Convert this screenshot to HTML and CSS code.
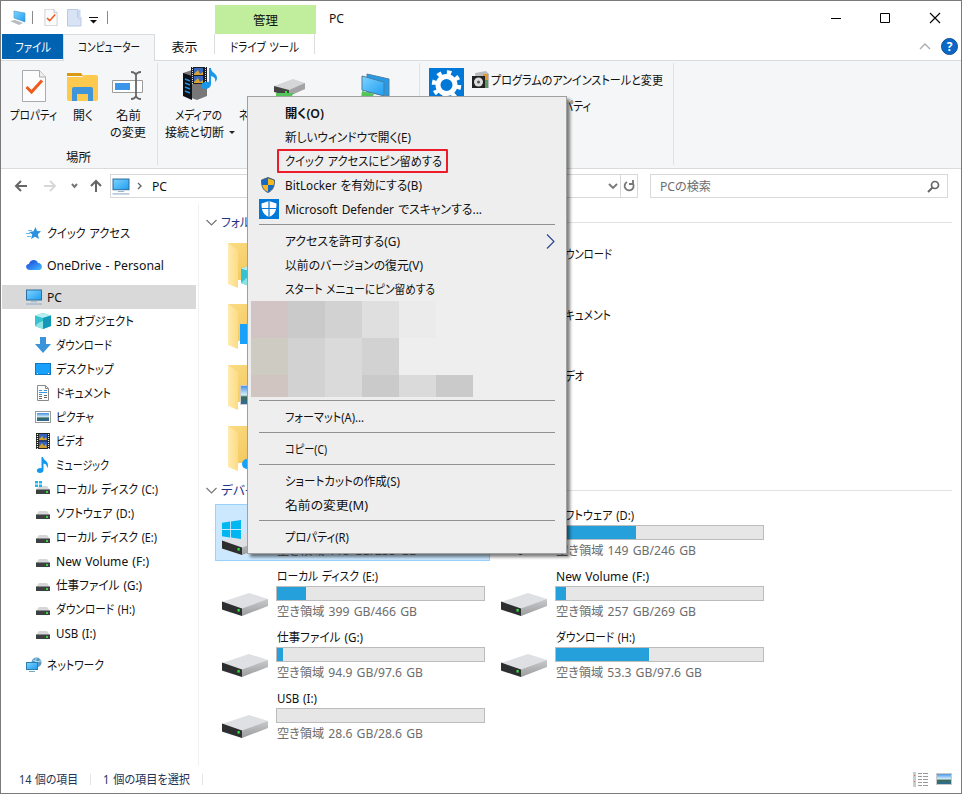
FILE: index.html
```html
<!DOCTYPE html>
<html lang="ja">
<head>
    <meta charset="UTF-8">
    <title>PC</title>
    <link rel="stylesheet" href="styles.css">
</head>
<body>
<!-- shared icons -->
<svg class="defs" width="0" height="0">
    <defs>
        <linearGradient id="blue" x1="0" y1="0" x2="1" y2="1"><stop offset="0" stop-color="#7fd4ff"/><stop offset="1" stop-color="#1e9cf0"/></linearGradient>
        <linearGradient id="gold" x1="0" y1="0" x2="1" y2="1"><stop offset="0" stop-color="#fbdc84"/><stop offset="1" stop-color="#f0c04e"/></linearGradient>
        <linearGradient id="flap" x1="0" y1="0" x2="1" y2="0"><stop offset="0" stop-color="#ffeab0"/><stop offset="1" stop-color="#fbdc84"/></linearGradient>
        <linearGradient id="side" x1="0" y1="0" x2="0" y2="1"><stop offset="0" stop-color="#c9cacc"/><stop offset="1" stop-color="#9b9c9e"/></linearGradient>
        <linearGradient id="cloud" x1="0" y1="0" x2="1" y2="1"><stop offset="0" stop-color="#1046c8"/><stop offset=".5" stop-color="#2d7df0"/><stop offset="1" stop-color="#42c3fa"/></linearGradient>
        <linearGradient id="photo" x1="0" y1="0" x2="0" y2="1"><stop offset="0" stop-color="#3f8fe0"/><stop offset=".5" stop-color="#d8eefb"/><stop offset=".6" stop-color="#3d6b56"/><stop offset="1" stop-color="#2a6ca0"/></linearGradient>
    </defs>
    <symbol id="pc" viewBox="0 0 16 16">
        <rect x=".5" y="1" width="15" height="10" fill="url(#blue)" stroke="#2d6f9e"/>
        <path d="M5 12.7h6" stroke="#9db4c9"/><path d="M0 15h16" stroke="#8fa8c8"/>
    </symbol>
    <symbol id="smalldrive" viewBox="0 0 16 16">
        <path d="M4 5h8l3 4H1z" fill="#d6d7d9"/><rect x="1" y="8.500" width="14" height="4.500" fill="#3d4043"/><rect x="11" y="10" width="2" height="2" fill="#35d63c"/>
    </symbol>
    <symbol id="drive" viewBox="0 0 48 26">
        <path d="M0 10 27 1l19 6v6L20 24 0 18z" fill="#dfe0e4"/>
        <path d="M20 16.500 46 7v7L20 24z" fill="url(#side)"/>
        <path d="M0 9.500 20 16.500V24L0 17.500z" fill="#2c2e2f"/>
        <rect x="15.500" y="17" width="2.200" height="2.600" fill="#2fe33b"/>
    </symbol>
    <symbol id="folder" viewBox="0 0 48 48">
        <path d="M1 1h37v42l-27-3z" fill="url(#gold)"/><path d="M1 1 11 8v38L1 42z" fill="url(#flap)"/><path d="M11 38h14v4l-14-1z" fill="#fff"/>
    </symbol>
    <symbol id="note" viewBox="0 0 16 16">
        <path d="M8 0c.4 3.500 5 3.500 5 8.500 0 1-.4 2-1 2.600.2-2.800-1.200-4.100-3.500-4.500V13c0 1.700-1.600 3-3.500 3s-3.200-1-3.200-2.500S3.500 11 5.200 11l1.300.2V0z" fill="#1198f0"/>
    </symbol>
    <symbol id="film" viewBox="0 0 16 16">
        <rect x="1" width="14" height="16" fill="#222"/><rect x="4" y="1" width="8" height="6.500" fill="#3461bd"/><rect x="4" y="8.500" width="8" height="6.500" fill="#3461bd"/>
        <path d="M4 6.500 7 3l2 3 2-2 1 3H4zM4 14l3-4 2 3 2-2 1 4H4z" fill="#d3a02d"/>
        <path d="M2.500 1v15M13.500 1v15" stroke="#eee" stroke-width="1.200" stroke-dasharray="1 1"/>
    </symbol>
    <symbol id="picture" viewBox="0 0 16 16"><rect x=".5" y="2.500" width="15" height="11" fill="#fff" stroke="#9a9a9a"/><rect x="2" y="4" width="12" height="8" fill="url(#photo)"/></symbol>
    <symbol id="checkdoc" viewBox="0 0 24 32">
        <path d="M.5.5h17L23.500 7v24.500H.5z" fill="#fcfcfc" stroke="#a9abad"/><path d="M17.500.5V7h6" fill="#eee" stroke="#a9abad"/><path d="m4.500 17 5 5 10.500-11.500" fill="none" stroke="#ef5b1b" stroke-width="3"/>
    </symbol>
    <symbol id="cube" viewBox="0 0 16 16"><path d="M0 2.500 8 0l8 2.500v10.500l-8 3-8-3z" fill="#35c3cf"/><path d="M0 2.500 8 5l8-2.500L8 0z" fill="#b8eef1"/><path d="M8 5l8-2.500V13l-8 3z" fill="#1498b8"/><path d="m4 9.500 4-1.500v8l-8-3z" fill="#8be4e3"/></symbol>
    <symbol id="win" viewBox="0 0 20 20"><path d="M0 3l8.500-1.300v7.800H0zM9.500 1.500 20 0v9.500H9.500zM0 10.500h8.500v7.800L0 17zM9.500 10.500H20V20L9.500 18.500z" fill="#00b7f1"/></symbol>
</svg>

<div class="window">
    <div class="titlebar">
        <svg class="ql-pc" width="17" height="16" viewBox="0 0 17 16"><path d="m4 1 11 2v9L4 8z" fill="url(#blue)" stroke="#4b93bf" stroke-width=".6"/><path d="m0 11 5-1 8 3-4 2z" fill="#b7bcc2"/></svg>
        <i class="bar"></i>
        <svg class="ql-doc" width="14" height="17"><use href="#checkdoc"/></svg>
        <svg class="ql-folder" width="15" height="18"><path d="M.5.5h10v8h3.500v8.500H.5z" fill="#d8e4f5" stroke="#bccbe0"/><path d="M10.500.5h3v10l-2 1z" fill="#cbdaf0"/></svg>
        <svg class="ql-arrow" width="9" height="8"><path d="M0 1.500h9" stroke="#111"/><path d="M1 4h7L4.500 7.500z" fill="#111"/></svg>
        <i class="bar"></i>
        <div class="manage"><span data-w="25">管理</span></div>
        <span class="title" data-w="15">PC</span>
        <svg class="winbuttons" width="112" height="12"><path d="M1 6.500h10" stroke="#000"/><path d="M50.500 1.500h9v9h-9z" fill="none" stroke="#000"/><path d="m100 1 10 10M110 1l-10 10" stroke="#000" stroke-width="1.100"/></svg>
    </div>

    <div class="tabs">
        <div class="tab file"><span data-w="36">ファイル</span></div>
        <div class="tab active"><span data-w="62">コンピューター</span></div>
        <div class="tab view"><span data-w="26">表示</span></div>
        <div class="tab tools"><span data-w="69">ドライブ ツール</span></div>
        <svg class="collapse" width="12" height="8"><path d="m1 7 5-5 5 5" fill="none" stroke="#aaa" stroke-width="1.300"/></svg>
        <div class="help">?</div>
    </div>

    <div class="ribbon">
        <div class="group place">
            <div class="buttons">
                <div class="rbtn w62"><svg width="24" height="32"><use href="#checkdoc"/></svg><span data-w="47">プロパティ</span></div>
                <div class="rbtn w36"><svg width="32" height="32" viewBox="0 0 32 32"><path d="M0 3h14l2 3H0z" fill="#d99a12"/><path d="M0 7h15l2-2h12q2 0 2 2v22q0 2-2 2H2q-2 0-2-2z" fill="#fdc94e"/><path d="M5 31V19q0-2 2-2h17q2 0 2 2v12h-5v-7H10v7z" fill="#3f94da"/></svg><span data-w="20">開く</span></div>
                <div class="rbtn w54"><svg width="32" height="32" viewBox="0 0 32 32"><path d="M.5 10.500h30v12H.5z" fill="#fff" stroke="#9c9c9c"/><rect x="3" y="13" width="15" height="7" fill="#3a96e8"/><path d="M19 2q4 0 5 3 1-3 5-3M24 4v22M19 29q4 0 5-3 1 3 5 3" fill="none" stroke="#666" stroke-width="1.800"/></svg><span data-w="25">名前</span><span data-w="36">の変更</span></div>
            </div>
            <div class="caption"><span data-w="25">場所</span></div>
        </div>
        <div class="group net">
            <div class="buttons">
                <div class="rbtn media"><svg width="36" height="34" viewBox="0 0 36 34"><path d="m1 6 9-3 15 2v24l-10 4-14-5z" fill="#777"/><path d="m1 6 9 3v24l-9-4z" fill="#0c1118"/><path d="m3 12 5 2M3 16l5 2M3 20l5 2M3 24l5 2" stroke="#268de0" stroke-width="1.500"/><rect x="9" width="16" height="17" fill="#1c1e25"/><path d="M12 1h9v7h-9zM12 9h9v7h-9z" fill="#3767ba"/><path d="m12 7 4-4 2 4 3-2v3h-9zM12 15l4-4 2 4 3-2v3h-9z" fill="#dda330"/><path d="M10.500 0v17M23.500 0v17" stroke="#ddd" stroke-dasharray="1 1"/><path d="M27 1h2c0 5 6 5 6 10 0 2-1 3-2 4 1-4-1-5-4-6v8c0 3-3 5-6 5-3 0-4-2-4-3 0-3 4-5 8-4z" fill="#1997e8"/></svg><span data-w="47">メディアの</span><span class="withcaret"><span data-w="59">接続と切断</span></span></div>
                <div class="rbtn cut"><svg class="netdrive" width="34" height="32" viewBox="0 0 34 32"><path d="m1 10 19-7 12 4v6l-16 7-15-5z" fill="#d5d6d8"/><path d="m1 10 15 4v6L1 16z" fill="#444"/><path d="m16 14 16-7v6l-16 7z" fill="#a4a4a6"/><rect x="12" y="15" width="2" height="2" fill="#2fe33b"/><path d="M3 17h18l-3 4H3z" fill="#55c45b"/></svg><span data-w="85">ネットワーク ドライブ</span></div>
                <svg class="netpc" width="32" height="32" viewBox="0 0 32 32"><path d="m6 1 22 5v17L6 19z" fill="#269ae6" stroke="#5181a3"/><path d="m1 3 22 6v14L1 17z" fill="url(#blue)" stroke="#4a7da2"/><path d="m1 18 12 3-2 4H0z" fill="#55c45b"/></svg>
            </div>
        </div>
        <div class="group system">
            <div class="gear"><svg width="35" height="35" viewBox="0 0 35 35"><g fill="none" stroke="#fff"><circle cx="17.500" cy="17" r="8.500" stroke-width="5"/><circle cx="17.500" cy="17" r="12.500" stroke-width="4.500" stroke-dasharray="4.400 5.417"/></g></svg></div>
            <div class="links">
                <div class="link"><svg width="17" height="18"><path d="m3 2 11-2 3 3v14H5z" fill="#bbb"/><rect x="11" y="3" width="5" height="7" fill="#e59a31"/><rect x="10" y="9" width="6" height="8" fill="#579863"/><rect y="5" width="13" height="12" fill="#222"/><circle cx="6.500" cy="11" r="4.500" fill="#ddd"/><circle cx="6.500" cy="11" r="1.500" fill="#555"/></svg><span data-w="172">プログラムのアンインストールと変更</span></div>
                <div class="link second"><span data-w="100">システムのプロパティ</span></div>
            </div>
        </div>
    </div>

    <div class="navbar">
        <svg class="arrows" width="92" height="16" viewBox="0 0 92 16"><g fill="none" stroke-width="2"><path d="M13 8H2M7 3 2 8l5 5" stroke="#666"/><path d="M30 8h11M36 3l5 5-5 5" stroke="#d8d8d8"/><path d="m58 6 2.500 3L63 6" stroke="#777"/><path d="M82 14V3M77 8l5-5 5 5" stroke="#666"/></g></svg>
        <div class="address">
            <svg width="18" height="17"><use href="#pc"/></svg>
            <svg class="sep" width="6" height="8"><path d="m1 1 3 3-3 3" fill="none" stroke="#666" stroke-width="1.400"/></svg>
            <span data-w="15">PC</span>
            <svg class="drop" width="10" height="8"><path d="m1 2 4 4 4-4" fill="none" stroke="#777" stroke-width="1.800"/></svg>
            <div class="refresh"><svg width="12" height="14" viewBox="0 0 12 14"><path d="M3 3.500A4.500 4.500 0 1 0 8 3M2 1v4h4" fill="none" stroke="#777" stroke-width="1.800" transform="matrix(-1 0 0 1 12 0)"/></svg></div>
        </div>
        <div class="search"><span data-w="51">PCの検索</span><svg width="13" height="13"><circle cx="8" cy="5" r="3.500" fill="none" stroke="#666" stroke-width="1.700"/><path d="M5.500 7.500 1 12" stroke="#666" stroke-width="2"/></svg></div>
    </div>

    <div class="main">
        <div class="tree">
            <div class="node root"><svg width="16" height="16" viewBox="0 0 16 16"><path d="m9.500 2 1.500 4 4 .3-3.200 2.900L13 14l-4-2.300L5 14l1.300-4.500L3 7l4.500-.8z" fill="#2c91df"/><path d="M2 5.500h4M0 8.500h4M1 11.500h4" stroke="#6db8ee"/></svg><span data-w="83">クイック アクセス</span></div>
            <div class="node root"><svg width="16" height="16" viewBox="0 0 16 16"><path d="M4 13C-1 13-1 7 3 7c1-5 8-5 9-1 5 0 5 7 1 7z" fill="url(#cloud)"/></svg><span data-w="117">OneDrive - Personal</span></div>
            <div class="node root selected"><svg width="16" height="16"><use href="#pc"/></svg><span data-w="15">PC</span></div>
            <div class="node"><svg width="16" height="16"><use href="#cube"/></svg><span data-w="78">3D オブジェクト</span></div>
            <div class="node"><svg width="16" height="16"><path d="M5 0h6v7h5l-8 9-8-9h5z" fill="#3b93dc"/></svg><span data-w="56">ダウンロード</span></div>
            <div class="node"><svg width="16" height="16"><rect x=".5" y="2.500" width="15" height="11" fill="#18a0fa" stroke="#0f79c5"/><path d="M2 12.500h1M13 12.500h1" stroke="#fff"/></svg><span data-w="58">デスクトップ</span></div>
            <div class="node"><svg width="16" height="16"><path d="M2.500.5h8l3 3v12h-11z" fill="#fff" stroke="#8a8a8a"/><path d="M10.500.5v3h3" fill="none" stroke="#8a8a8a"/><path d="M4 5.500h3M4 7.500h8M4 9.500h3M9 5.500h3" stroke="#3b99de"/><path d="M4 11.500h3M9 10.500h3M4 13.500h3M9 12.500h3" stroke="#666"/></svg><span data-w="55">ドキュメント</span></div>
            <div class="node"><svg width="16" height="16"><use href="#picture"/></svg><span data-w="38">ピクチャ</span></div>
            <div class="node"><svg width="16" height="16"><use href="#film"/></svg><span data-w="28">ビデオ</span></div>
            <div class="node"><svg width="16" height="16"><use href="#note"/></svg><span data-w="53">ミュージック</span></div>
            <div class="node"><svg width="16" height="16"><use href="#smalldrive"/><path d="M0 0h3v2.500H0zM4 0h3v2.500H4zM0 3.500h3V6H0zM4 3.500h3V6H4z" fill="#18b8ee"/></svg><span data-w="102">ローカル ディスク (C:)</span></div>
            <div class="node"><svg width="16" height="16"><use href="#smalldrive" y="1"/></svg><span data-w="78">ソフトウェア (D:)</span></div>
            <div class="node"><svg width="16" height="16"><use href="#smalldrive" y="1"/></svg><span data-w="101">ローカル ディスク (E:)</span></div>
            <div class="node"><svg width="16" height="16"><use href="#smalldrive" y="1"/></svg><span data-w="93">New Volume (F:)</span></div>
            <div class="node"><svg width="16" height="16"><use href="#smalldrive" y="1"/></svg><span data-w="86">仕事ファイル (G:)</span></div>
            <div class="node"><svg width="16" height="16"><use href="#smalldrive" y="1"/></svg><span data-w="79">ダウンロード (H:)</span></div>
            <div class="node"><svg width="16" height="16"><use href="#smalldrive" y="1"/></svg><span data-w="40">USB (I:)</span></div>
            <div class="node root last"><svg width="16" height="16"><circle cx="10.500" cy="5.500" r="5" fill="#5b9dc7"/><path d="M7 3q4 3 8 1M10 1q-2 5 2 9" stroke="#b6dcf0" fill="none"/><rect x=".5" y="5.500" width="11" height="7" fill="url(#blue)" stroke="#2d7faf"/><path d="M3 14.500h6" stroke="#76a9c9"/></svg><span data-w="57">ネットワーク</span></div>
        </div>

        <div class="content">
            <div class="head"><svg width="11" height="7"><path d="m.5 1 5 5 5-5" fill="none" stroke="#777" stroke-width="1.200"/></svg><span data-w="69">フォルダー (7)</span><i></i></div>
            <div class="tiles">
                <div class="tile"><svg class="fold" width="48" height="48"><use href="#folder"/><use href="#cube" x="13" y="23" width="24" height="22"/></svg><div class="info plain"></div></div>
                <div class="tile"><svg class="fold" width="48" height="48"><use href="#folder"/></svg><div class="info plain"><span data-w="56">ダウンロード</span></div></div>
                <div class="tile"><svg class="fold" width="48" height="48"><use href="#folder"/><path d="M13 21h24v20H13z" fill="#18a0fa"/></svg><div class="info plain"></div></div>
                <div class="tile"><svg class="fold" width="48" height="48"><use href="#folder"/></svg><div class="info plain"><span data-w="55">ドキュメント</span></div></div>
                <div class="tile"><svg class="fold" width="48" height="48"><use href="#folder"/><path d="M13.500 21.500h24v19h-24z" fill="url(#photo)" stroke="#ccc"/></svg><div class="info plain"></div></div>
                <div class="tile"><svg class="fold" width="48" height="48"><use href="#folder"/></svg><div class="info plain"><span data-w="28">ビデオ</span></div></div>
                <div class="tile"><svg class="fold" width="48" height="48"><use href="#folder"/><circle cx="20" cy="39" r="5" fill="#18a0fa"/></svg><div class="info plain"></div></div>
            </div>
            <div class="head"><svg width="11" height="7"><path d="m.5 1 5 5 5-5" fill="none" stroke="#777" stroke-width="1.200"/></svg><span data-w="120">デバイスとドライブ (7)</span><i></i></div>
            <div class="tiles">
                <div class="tile picked"><div class="windrive"><svg width="19" height="19"><use href="#win"/></svg><svg width="48" height="26"><use href="#drive"/></svg></div><div class="info"><span data-w="102">ローカル ディスク (C:)</span><div class="meter"><b style="width:52%"></b></div><span class="free" data-w="140">空き領域 118 GB/235 GB</span></div></div>
                <div class="tile"><svg class="disk" width="48" height="26"><use href="#drive"/></svg><div class="info"><span data-w="78">ソフトウェア (D:)</span><div class="meter"><b style="width:38.500%"></b></div><span class="free" data-w="140">空き領域 149 GB/246 GB</span></div></div>
                <div class="tile"><svg class="disk" width="48" height="26"><use href="#drive"/></svg><div class="info"><span data-w="101">ローカル ディスク (E:)</span><div class="meter"><b style="width:14.200%"></b></div><span class="free" data-w="140">空き領域 399 GB/466 GB</span></div></div>
                <div class="tile"><svg class="disk" width="48" height="26"><use href="#drive"/></svg><div class="info"><span data-w="93">New Volume (F:)</span><div class="meter"><b style="width:5%"></b></div><span class="free" data-w="140">空き領域 257 GB/269 GB</span></div></div>
                <div class="tile"><svg class="disk" width="48" height="26"><use href="#drive"/></svg><div class="info"><span data-w="86">仕事ファイル (G:)</span><div class="meter"><b style="width:3%"></b></div><span class="free" data-w="146">空き領域 94.9 GB/97.6 GB</span></div></div>
                <div class="tile"><svg class="disk" width="48" height="26"><use href="#drive"/></svg><div class="info"><span data-w="79">ダウンロード (H:)</span><div class="meter"><b style="width:45%"></b></div><span class="free" data-w="146">空き領域 53.3 GB/97.6 GB</span></div></div>
                <div class="tile"><svg class="disk" width="48" height="26"><use href="#drive"/></svg><div class="info"><span data-w="40">USB (I:)</span><div class="meter"></div><span class="free" data-w="146">空き領域 28.6 GB/28.6 GB</span></div></div>
            </div>
        </div>
    </div>

    <div class="status">
        <span data-w="59">14 個の項目</span><i></i><span data-w="87">1 個の項目を選択</span><i></i>
        <svg class="views" width="40" height="16"><path d="M2.500 1v15" stroke="#c5cdd5" stroke-width="3"/><path d="M2 4.500h1M2 10.500h1" stroke="#d9704e"/><path d="M6 2.500h4M11 2.500h5M6 5.500h4M11 5.500h5M6 8.500h4M11 8.500h5M6 11.500h4M11 11.500h5M6 14.500h4M11 14.500h5" stroke="#999"/><rect x="24.500" y="2.500" width="15" height="11" fill="url(#photo)" stroke="#c9c9c9"/></svg>
    </div>

    <div class="menu">
        <div class="item strong"><span data-w="39">開く(O)</span></div>
        <div class="item"><span data-w="126">新しいウィンドウで開く(E)</span></div>
        <div class="item"><span data-w="157">クイック アクセスにピン留めする</span><div class="redbox"></div></div>
        <div class="item"><svg class="shield" width="14" height="16" viewBox="0 0 14 16"><path d="M7 .5 13.500 3c0 6-1 10-6.500 12.500C1.500 13 .5 9 .5 3z" fill="#1769c6" stroke="#566270"/><path d="M7 1.500V8h5.700c.3-1.500.3-3 .3-4.500zM7 8H1.300C2 11.500 4 13.500 7 14.700z" fill="#f6b81d"/></svg><span data-w="137">BitLocker を有効にする(B)</span></div>
        <div class="item"><svg class="defender" width="20" height="20"><rect width="20" height="20" fill="#0078d7"/><path d="m10 2 7.500 2.500c0 7-1.500 11-7.500 13.500C4 15.500 2.500 11.500 2.500 4.500z" fill="#fff"/><path d="M10 2v16M2 9.500h16" stroke="#0078d7" stroke-width="1.200"/></svg><span data-w="197">Microsoft Defender でスキャンする...</span></div>
        <hr>
        <div class="item"><span data-w="115">アクセスを許可する(G)</span><svg class="sub" width="9" height="15"><path d="m1 .5 7 7-7 7" fill="none" stroke="#26418f" stroke-width="1.100"/></svg></div>
        <div class="item"><span data-w="138">以前のバージョンの復元(V)</span></div>
        <div class="item"><span data-w="150">スタート メニューにピン留めする</span></div>
        <div class="mosaic">
            <i class="c1"></i><i class="c2"></i><i class="c3"></i><i class="c4"></i><i class="c5"></i><i></i>
            <i class="c6"></i><i class="c3"></i><i class="c7"></i><i class="c3"></i><i></i><i></i>
            <i class="c8"></i><i class="c3"></i><i class="c7"></i><i class="c2"></i><i class="c7"></i><i class="c2"></i>
        </div>
        <hr>
        <div class="item"><span data-w="79">フォーマット(A)...</span></div>
        <hr>
        <div class="item"><span data-w="42">コピー(C)</span></div>
        <hr>
        <div class="item"><span data-w="115">ショートカットの作成(S)</span></div>
        <div class="item"><span data-w="83">名前の変更(M)</span></div>
        <hr>
        <div class="item"><span data-w="64">プロパティ(R)</span></div>
    </div>
</div>
<script src="script.js"></script>
</body>
</html>
```

FILE: styles.css
```css
* {
    box-sizing: border-box;
}

body {
    margin: 0;
    font-family: "Noto Sans", "Noto Sans CJK JP", sans-serif;
    font-size: 12.5px;
    font-feature-settings: "palt";
    line-height: 18px;
    word-spacing: 1px;
    color: #111;
    overflow: hidden;
}

svg {
    display: block;
    flex: none;
}

.defs {
    position: absolute;
}

[data-w] {
    display: inline-block;
    flex: none;
    white-space: nowrap;
    transform-origin: 0 50%;
}

.window {
    position: relative;
    display: flex;
    flex-direction: column;
    width: 962px;
    height: 794px;
    border: 1px solid #7a7a7a;
    background: #fff;
}

/* title bar */
.titlebar {
    display: flex;
    align-items: center;
    height: 33px;
    flex: none;
}

.bar {
    width: 1px;
    height: 13px;
    background: #8a8a8a;
}

.ql-pc {
    margin: 0 5px 0 9px;
}

.ql-doc {
    margin-left: 11px;
}

.ql-folder {
    margin-left: 9px;
}

.ql-arrow {
    margin: 4px 9px 0 7px;
}

.manage {
    width: 101px;
    height: 29px;
    margin: 4px 13px 0 107px;
    padding-top: 7px;
    background: #c0ee9c;
    text-align: center;
}

.title {
    margin-top: 2px;
}

.winbuttons {
    margin-left: auto;
    margin-right: 19px;
}

/* tabs */
.tabs {
    display: flex;
    height: 27px;
    flex: none;
    padding-left: 1px;
    border-bottom: 1px solid #d9dbdd;
}

.tab {
    height: 25px;
    padding-top: 5px;
    text-align: center;
}

.file {
    width: 61px;
    background: #0063b1;
    color: #fff;
}

.active {
    width: 92px;
    height: 27px;
    padding-top: 4px;
    border: 1px solid #dadbdc;
    border-bottom: 0;
    background: #f5f6f7;
}

.view {
    width: 57px;
}

.tools {
    width: 101px;
    height: 20px;
    margin-left: 2px;
    border: solid #ddd;
    border-width: 0 1px;
}

.collapse {
    margin: 8px 10px 0 auto;
}

.help {
    width: 17px;
    height: 17px;
    margin: 4px 3px 0 0;
    border: 1px solid #13508c;
    border-radius: 50%;
    background: #0a68c8;
    color: #fff;
    font-size: 12px;
    font-weight: bold;
    line-height: 15px;
    text-align: center;
}

/* ribbon */
.ribbon {
    display: flex;
    height: 108px;
    flex: none;
    padding-top: 2px;
    background: #f5f6f7;
    border-bottom: 1px solid #d9dbdd;
}

.group {
    height: 102px;
    border-right: 1px solid #e0e1e2;
}

.buttons {
    display: flex;
    height: 86px;
}

.rbtn {
    display: flex;
    flex-direction: column;
    align-items: center;
    padding-top: 7px;
    line-height: 17px;
}

.rbtn svg {
    margin-bottom: 5px;
}

.place {
    width: 157px;
    padding-left: 2px;
}

.w62 {
    width: 61px;
}

.w36 {
    width: 37px;
    padding-left: 1px;
}

.w54 {
    width: 54px;
}

.caption {
    padding-right: 3px;
    line-height: 17px;
    text-align: center;
}

.net {
    width: 262px;
    overflow: hidden;
}

.media {
    width: 80px;
    padding-top: 4px;
}

.media svg {
    margin-bottom: 6px;
    margin-left: 3px;
}

.withcaret {
    display: flex;
    align-items: center;
    gap: 5px;
    margin-left: 3px;
}

.withcaret::after {
    content: "";
    border: solid transparent;
    border-width: 3px 3px 0;
    border-top-color: #222;
}

.cut {
    width: 85px;
    padding-left: 1px;
}

.netdrive {
    margin-top: 6px;
    margin-bottom: -1px !important;
    margin-left: 18px;
}

.netpc {
    margin: 10px 0 0 38px;
}

.system {
    display: flex;
    width: 254px;
    padding-left: 9px;
}

.gear {
    height: 35px;
    margin: 5px 8px 0 0;
    background: #0078d7;
}

.links {
    display: flex;
    flex-direction: column;
    gap: 7px;
    padding-top: 8px;
}

.link {
    display: flex;
    gap: 2px;
}

.link span {
    padding-top: 1px;
}

.second {
    padding-left: 19px;
}

/* address bar */
.navbar {
    display: flex;
    height: 35px;
    flex: none;
    padding: 5px 13px 6px 13px;
}

.arrows {
    margin: 4px 4px 0 0;
}

.address {
    display: flex;
    align-items: center;
    width: 528px;
    height: 24px;
    margin-right: 12px;
    padding-left: 1px;
    border: 1px solid #d9d9d9;
}

.address span,
.search span {
    padding-top: 2px;
}

.sep {
    margin: 0 9px 0 7px;
}

.drop {
    margin-left: auto;
    margin-right: 2px;
}

.refresh {
    display: flex;
    align-items: center;
    justify-content: center;
    width: 17px;
    height: 22px;
    border-left: 1px solid #d9d9d9;
}

.search {
    display: flex;
    align-items: center;
    justify-content: space-between;
    flex: 1;
    padding: 0 7px 0 9px;
    border: 1px solid #d9d9d9;
    color: #6d6d6d;
}

/* navigation pane */
.main {
    display: flex;
    height: 562px;
    flex: none;
}

.tree {
    width: 198px;
    flex: none;
    padding: 17px 2px 0 1px;
    border-right: 1px solid #f0f0f0;
}

.node {
    display: flex;
    align-items: center;
    gap: 5px;
    height: 24px;
    padding-left: 33px;
}

.node span,
.head span,
.status span,
.item span {
    padding-top: 2px;
}

.root {
    margin-bottom: 8px;
    padding-left: 24px;
}

.selected {
    margin-bottom: 0;
    background: #d9d9d9;
}

.last {
    margin-top: 8px;
}

/* content pane */
.content {
    flex: 1;
    padding: 4px 0 0 7px;
}

.head {
    display: flex;
    align-items: center;
    gap: 4px;
    height: 28px;
    color: #1e3287;
}

.head i {
    flex: 1;
    height: 1px;
    margin: 0 9px 0 4px;
    background: #e2e2e2;
}

.tiles {
    display: grid;
    grid-template-columns: 275px 275px;
    grid-auto-rows: 57px;
    gap: 4px;
    padding-left: 9px;
}

.tile {
    display: flex;
    padding-left: 7px;
}

.picked {
    padding-left: 6px;
    border: 1px solid #99d1ff;
    background: #cce8ff;
}

.picked .info {
    margin-top: -1px;
}

.fold {
    margin: 6px 0 0 5px;
}

.disk {
    margin-top: 27px;
}

.windrive {
    padding-top: 15px;
}

.windrive svg + svg {
    margin-top: -8px;
    position: relative;
}

.windrive svg:first-child {
    position: relative;
    z-index: 1;
}

.info {
    width: 209px;
    margin-left: 6px;
    padding-top: 3px;
}

.info span {
    display: block;
    margin-left: 1px;
}

.plain {
    margin-left: 1px;
    padding-top: 10px;
}

.meter {
    height: 15px;
    margin: 0 0 2px;
    border: 1px solid #bcbcbc;
    background: #e6e6e6;
}

.meter b {
    display: block;
    height: 13px;
    background: #26a0da;
}

.info .free {
    color: #6d6d6d;
}

/* status bar */
.status {
    display: flex;
    align-items: center;
    height: 26px;
    padding-left: 18px;
    color: #1d3557;
}

.status i {
    width: 1px;
    height: 11px;
    margin: 0 12px;
    background: #e4e4e4;
}

.views {
    margin: 0 9px 0 auto;
}

/* context menu */
.menu {
    position: absolute;
    left: 246px;
    top: 95px;
    width: 320px;
    height: 458px;
    padding: 4px 3px;
    border: 1px solid #a0a0a0;
    background: #eee;
    box-shadow: 3px 3px 3px rgba(0, 0, 0, 0.5);
}

.item {
    position: relative;
    display: flex;
    align-items: center;
    height: 24px;
    padding-left: 34px;
}

.strong {
    font-weight: 600;
}

.redbox {
    position: absolute;
    left: 26px;
    top: 0;
    width: 171px;
    height: 24px;
    border: 2px solid #ec1c2a;
    border-radius: 1px;
}

.shield {
    margin-left: -24px;
    margin-right: 10px;
}

.defender {
    margin-left: -26px;
    margin-right: 6px;
}

.sub {
    margin: 0 8px 0 auto;
}

.menu hr {
    height: 1px;
    margin: 3px 8px 4px;
    border: 0;
    background: #919191;
}

.mosaic {
    display: grid;
    grid-template-columns: repeat(6, 37px);
    grid-template-rows: 37px 37px 22px;
}

.c1 { background: #d2c4c4; }
.c2 { background: #cacaca; }
.c3 { background: #d2d2d2; }
.c4 { background: #dfdfdf; }
.c5 { background: #ebebeb; }
.c6 { background: #cecbc3; }
.c7 { background: #dadada; }
.c8 { background: #d0c5c0; }
```

FILE: script.js
```javascript
var labels = document.querySelectorAll('[data-w]');

labels.forEach(function(label) {
    var range = document.createRange();
    range.selectNodeContents(label);
    var natural = range.getBoundingClientRect().width;
    var wanted = parseFloat(label.dataset.w);
    label.style.width = wanted + 'px';
    label.style.transform = 'scaleX(' + (wanted / natural) + ')';
});
```
